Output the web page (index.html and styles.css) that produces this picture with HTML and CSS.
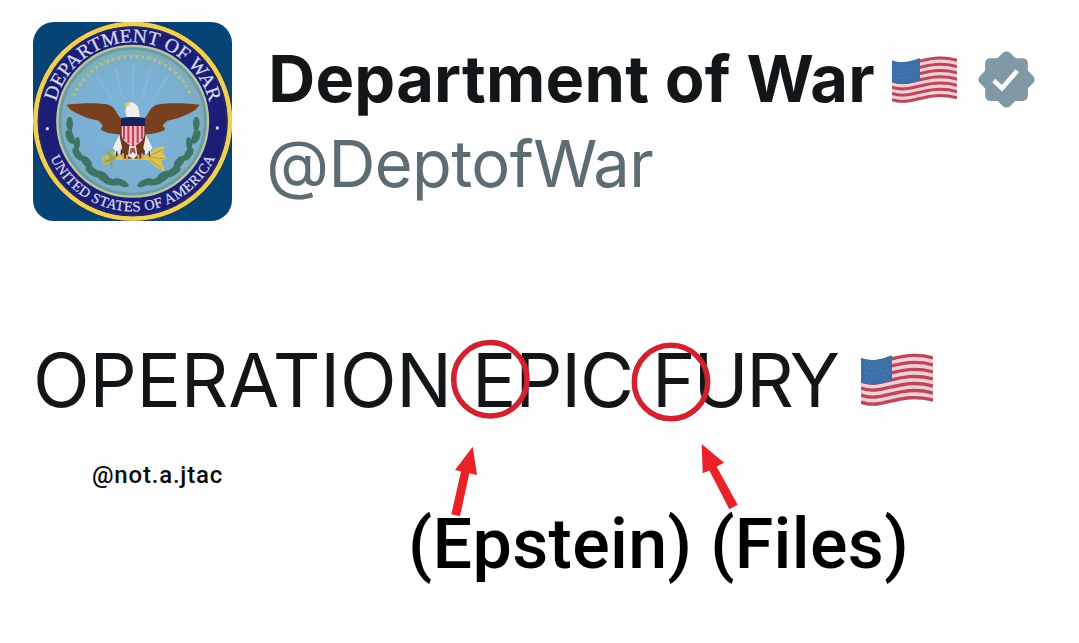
FILE: index.html
```html
<!DOCTYPE html>
<html lang="en">
<head>
    <meta charset="UTF-8">
    <meta name="viewport" content="width=device-width, initial-scale=1.0">
    <title>Department of War</title>
    <link rel="stylesheet" href="styles.css">
</head>
<body>
    <!-- shared flag, used in the name and in the post -->
    <svg class="defs" width="0" height="0">
        <symbol id="flag" viewBox="0 0 72 52" preserveAspectRatio="none">
            <path fill="#f6ced4" d="M0 5C22 13 38-6 72 3V48C38 39 22 58 0 50Z"/>
            <g fill="none" stroke="#b8485c" stroke-width="3.3">
                <path d="M0 6.8C22 14.8 38-4.2 72 4.8"/>
                <path d="M0 13.7C22 21.7 38 2.7 72 11.7"/>
                <path d="M0 20.6C22 28.6 38 9.6 72 18.6"/>
                <path d="M0 27.5C22 35.5 38 16.5 72 25.5"/>
                <path d="M0 34.4C22 42.4 38 23.4 72 32.4"/>
                <path d="M0 41.3C22 49.3 38 30.3 72 39.3"/>
                <path d="M0 48.2C22 56.2 38 37.2 72 46.2"/>
            </g>
            <path fill="#3c6ea8" d="M0 5C13 9.5 22 5 31 2.2V27C22 29.5 13 33.5 0 29Z"/>
            <g fill="none" stroke="#5f8dbd" stroke-width="1" stroke-dasharray="1 3.5">
                <path d="M3 10C13 13 22 9 30 6"/>
                <path d="M5 14.5C14 17 22 13.500 30 10.500"/>
                <path d="M3 19C13 22 22 18 30 15"/>
                <path d="M5 23.500C14 26 22 22.500 30 19.500"/>
            </g>
        </symbol>
    </svg>

    <div class="post">
        <header class="profile">
            <svg class="avatar" viewBox="25 20 597 597">
                <defs>
                    <path id="arc-top" d="M87 318A237 237 0 0 1 561 318"/>
                    <path id="arc-bottom" d="M54 318A270 270 0 0 0 594 318"/>
                    <radialGradient id="sky" cx="324" cy="330" r="230" gradientUnits="userSpaceOnUse">
                        <stop offset="0" stop-color="#7db4dc"/>
                        <stop offset=".75" stop-color="#7aafd2"/>
                        <stop offset="1" stop-color="#7fadb8"/>
                    </radialGradient>
                </defs>
                <rect x="25" y="20" width="597" height="597" fill="#064475"/>
                <circle cx="324" cy="318" r="302" fill="#2c3436"/>
                <circle cx="324" cy="318" r="292" fill="#1c1d76" stroke="#ecd05e" stroke-width="14"/>
                <circle cx="324" cy="318" r="282" fill="none" stroke="#2b2a55" stroke-width="5"/>
                <circle cx="324" cy="318" r="226" fill="url(#sky)" stroke="#b9c6a1" stroke-width="7"/>
                <circle cx="324" cy="318" r="218" fill="none" stroke="#6b9ca0" stroke-width="8"/>
                <g class="seal-text">
                    <text font-size="58"><textPath href="#arc-top" startOffset="60" textLength="626" lengthAdjust="spacingAndGlyphs">DEPARTMENT OF WAR</textPath></text>
                    <text font-size="43"><textPath href="#arc-bottom" startOffset="113" textLength="622">UNITED STATES OF AMERICA</textPath></text>
                </g>
                <circle cx="68" cy="340" r="5" fill="#d5daf0"/>
                <circle cx="578" cy="338" r="5" fill="#d5daf0"/>

                <!-- rays and stars -->
                <g stroke="#9bc6dc" stroke-width="5" opacity=".4">
                    <path d="M324 250V145M295 250L270 155M353 250L378 155M265 255L215 180M383 255L433 180"/>
                </g>
                <path d="M148 242A190 190 0 0 1 500 242" fill="none" stroke="#b9c27a" stroke-width="9" stroke-dasharray="7 11"/>
                <path d="M162 210A190 190 0 0 1 486 210" fill="none" stroke="#a4bd8c" stroke-width="6" stroke-dasharray="4 9"/>

                <!-- laurel -->
                <path d="M134 310C138 400 190 478 300 508M516 310C512 400 460 478 350 508" fill="none" stroke="#4a7365" stroke-width="7"/>
                <g fill="#3d7464">
                    <ellipse cx="135" cy="325" rx="10" ry="21"/>
                    <ellipse cx="136" cy="365" rx="11" ry="22" transform="rotate(-25 136 365)"/>
                    <ellipse cx="157" cy="385" rx="9" ry="20" transform="rotate(5 157 385)"/>
                    <ellipse cx="158" cy="417" rx="10" ry="22" transform="rotate(-35 158 417)"/>
                    <ellipse cx="186" cy="440" rx="12" ry="22" transform="rotate(-40 186 440)"/>
                    <ellipse cx="205" cy="470" rx="11" ry="26" transform="rotate(-60 205 470)"/>
                    <ellipse cx="235" cy="484" rx="13" ry="24" transform="rotate(-50 235 484)"/>
                    <ellipse cx="260" cy="500" rx="10" ry="26" transform="rotate(-80 260 500)"/>
                    <ellipse cx="290" cy="502" rx="10" ry="24" transform="rotate(-65 290 502)"/>
                    <ellipse cx="515" cy="325" rx="10" ry="21"/>
                    <ellipse cx="514" cy="365" rx="11" ry="22" transform="rotate(25 514 365)"/>
                    <ellipse cx="493" cy="385" rx="9" ry="20" transform="rotate(-5 493 385)"/>
                    <ellipse cx="492" cy="417" rx="10" ry="22" transform="rotate(35 492 417)"/>
                    <ellipse cx="464" cy="440" rx="12" ry="22" transform="rotate(40 464 440)"/>
                    <ellipse cx="445" cy="470" rx="11" ry="26" transform="rotate(60 445 470)"/>
                    <ellipse cx="415" cy="484" rx="13" ry="24" transform="rotate(50 415 484)"/>
                    <ellipse cx="390" cy="500" rx="10" ry="26" transform="rotate(80 390 500)"/>
                    <ellipse cx="360" cy="502" rx="10" ry="24" transform="rotate(65 360 502)"/>
                </g>

                <!-- olive branch and arrows -->
                <path d="M232 425L262 408L285 422L260 440L236 452Z" fill="#c2b65d"/>
                <path d="M245 412L275 430M240 440L285 425M255 405L262 458" stroke="#98a35c" stroke-width="6"/>
                <path d="M270 420H370L392 398L420 392L414 412L424 428L410 438L420 468L396 458L370 434H275Z" fill="#dcc355"/>
                <path d="M376 420L416 402M376 426L418 430M376 432L410 460" stroke="#b39b42" stroke-width="3"/>

                <!-- eagle -->
                <path fill="#78401f" d="M125 268C175 262 225 262 252 268C275 276 276 300 290 310V358C262 356 240 352 228 342L234 330L222 316L188 308L160 296L138 284Z"/>
                <path fill="#78401f" d="M525 268C475 262 425 262 396 268C373 276 372 300 358 310V358C386 356 408 352 422 342L414 330L428 316L462 308L490 296L512 284Z"/>
                <path fill="#6d3a1e" d="M287 320H362V405L350 430H298L285 402Z"/>
                <path fill="#eeeeec" d="M284 360L264 398L272 406L268 416L280 412L286 420L292 396ZM364 360L384 398L376 406L380 416L368 412L362 420L356 396ZM306 306L302 286L308 264C320 256 336 262 342 280L346 306Z"/>
                <path fill="#e9c04c" d="M316 261C304 260 299 266 299 276L312 270Z"/>
                <path fill="#e6eaf0" d="M314 392L324 384L334 392L338 420L326 432L310 422Z"/>
                <path fill="#a5533f" d="M318 398H330L334 416L324 410L314 418Z"/>
                <path fill="#edb9c2" d="M291 328H359V358C358 378 338 386 325 396C312 386 292 378 291 358Z"/>
                <path stroke="#c43f58" stroke-width="6" d="M298 328V372M311 328V383M325 328V393M339 328V383M352 328V372"/>
                <path fill="#17215c" d="M289 308Q325 302 361 308V332H289Z"/>
                <path stroke="#d4a944" stroke-width="6" d="M295 414V432M307 418V436M341 418V436M353 414V432"/>
                <path stroke="#3c3222" stroke-width="4" d="M276 408V424M290 404V418M358 404V418M374 408V424"/>
            </svg>
            <div class="identity">
                <div class="name-row">
                    <h1 class="name">Department of War</h1>
                    <svg class="flag-small"><use href="#flag"/></svg>
                    <svg class="badge" viewBox="-28 -28 56 56">
                        <rect x="-21" y="-21" width="42" height="42" rx="5"/>
                        <rect x="-21" y="-21" width="42" height="42" rx="5" transform="rotate(45)"/>
                        <path d="M-12.500 1L-4.500 8.500L10.500-8.500"/>
                    </svg>
                </div>
                <div class="handle">@DeptofWar</div>
            </div>
        </header>

        <p class="message">
            <span class="operation">OPERATION</span>
            <span class="epic">EPIC</span>
            <span class="fury">FURY</span>
            <svg class="flag-large"><use href="#flag"/></svg>
        </p>

        <div class="credit">@not.a.jtac</div>
        <div class="caption">(Epstein) (Files)</div>

        <!-- red circles and arrows over the post -->
        <svg class="marks" viewBox="0 0 1079 643">
            <circle cx="490.300" cy="379.300" r="36.700"/>
            <circle cx="671" cy="382" r="36.700"/>
            <path d="M472.700 446.700L455 470L461 471.500L451.300 514.300L460 516.300L469.300 473.300L477 475Z"/>
            <path d="M701.700 444L702.700 473.300L709.300 470.500L729.300 509.300L737.700 504.700L716.700 466.700L724 462.700Z"/>
        </svg>
    </div>
</body>
</html>
```

FILE: styles.css
```css
body {
    margin: 0;
    background: #fefefe;
    color: #131618;
    font-family: Inter, "Liberation Sans", sans-serif;
}

.defs {
    display: block;
}

.post {
    position: relative;
    height: 643px;
    overflow: hidden;
}

.profile {
    display: flex;
    gap: 34px;
    padding: 21.5px 0 0 33.3px;
}

.avatar {
    width: 199px;
    height: 199px;
    border-radius: 21px;
    flex: none;
}

.seal-text {
    fill: #d5daf0;
    stroke: #d5daf0;
    stroke-width: .8;
    font-family: "Liberation Serif", serif;
}

.identity {
    padding-top: 18px;
}

.name-row {
    display: flex;
    align-items: center;
    height: 80px;
}

.name {
    margin: -1px 0 0 2px;
    width: 624px;
    font-size: 65px;
    font-weight: 700;
    letter-spacing: .2px;
    line-height: 80px;
    white-space: nowrap;
}

.flag-small {
    width: 65px;
    height: 47px;
    flex: none;
}

.badge {
    width: 57px;
    height: 57px;
    margin-left: 21px;
    flex: none;
    fill: #8198a6;
}

.badge path {
    fill: none;
    stroke: #fdfdfd;
    stroke-width: 4.5;
}

.handle {
    margin-top: 4px;
    color: #5d6b73;
    font-size: 65px;
    letter-spacing: -.6px;
    line-height: 80px;
}

.message {
    display: flex;
    align-items: center;
    height: 90px;
    margin: 114px 0 0 33px;
    font-size: 74px;
    line-height: 88px;
    white-space: nowrap;
}

.operation {
    width: 439px;
    letter-spacing: -.2px;
}

.epic {
    width: 180px;
    letter-spacing: -1.2px;
}

.fury {
    width: 209px;
    letter-spacing: -2.3px;
}

.flag-large {
    width: 72px;
    height: 53px;
}

.credit {
    margin: 35px 0 0 92px;
    color: #0b0b0b;
    font: 500 24px/30px Roboto, sans-serif;
    letter-spacing: .8px;
}

.caption {
    margin: 13px 0 0 408px;
    color: #000;
    font: 500 70px/82px Roboto, sans-serif;
    letter-spacing: .35px;
    white-space: nowrap;
}

.marks {
    position: absolute;
    top: 0;
    left: 0;
    width: 1079px;
    height: 643px;
    fill: #e92128;
}

.marks circle {
    fill: none;
    stroke: #d0222f;
    stroke-width: 5.5;
}
```
